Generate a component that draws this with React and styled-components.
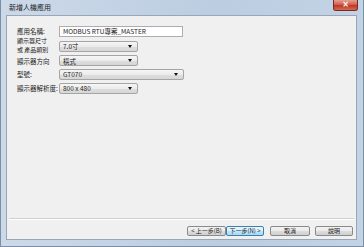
import React from 'react';
import styled, { createGlobalStyle } from 'styled-components';

const Global = createGlobalStyle`
  html, body { margin: 0; padding: 0; background: #bfcfe2; }
  body { font-family: "Noto Sans CJK TC", "Liberation Sans", sans-serif; }
`;

const Window = styled.div`
  width: 364px;
  height: 247px;
  box-sizing: border-box;
  display: flex;
  flex-direction: column;
  background: linear-gradient(90deg, #ccd9e9 0%, #bccde1 60%, #c3d3e6 100%);
  border: 1px solid #7d8ea4;
  border-top: none;
  padding: 0 6px 6px 5px;
`;

const TitleBar = styled.div`
  height: 15px;
  display: flex;
  align-items: flex-start;
  justify-content: space-between;
  padding-left: 3px;
`;

const Title = styled.span`
  font-size: 7px;
  line-height: 14px;
  color: #222;
`;

const CloseButton = styled.div`
  width: 23px;
  height: 10px;
  margin-right: -1px;
  border: 1px solid #7a2a22;
  border-top: none;
  border-radius: 0 0 3px 3px;
  background: linear-gradient(#e5a090 0%, #d2604c 45%, #c03a28 55%, #d56a50 100%);
  display: flex;
  align-items: center;
  justify-content: center;
  color: #fff;
  font-size: 8px;
  font-weight: bold;
  line-height: 1;
  font-family: "DejaVu Sans", sans-serif;
`;

const Content = styled.div`
  flex: 1;
  display: flex;
  flex-direction: column;
  background: #f0f0f0;
  border: 1px solid #98a6b8;
`;

const Form = styled.div`
  display: grid;
  grid-template-columns: 42px auto;
  grid-template-rows: 14px 16px 13px 14px 14px;
  align-items: center;
  padding: 8px 0 0 10px;
`;

const Label = styled.span`
  font-size: 6.5px;
  line-height: 8px;
  color: #222;
  white-space: nowrap;
`;

const StackedLabel = styled.span`
  display: flex;
  flex-direction: column;
  font-size: 6px;
  line-height: 8.8px;
  color: #222;
  white-space: nowrap;
`;

const TextInput = styled.div`
  width: ${p => p.$w}px;
  height: 11px;
  box-sizing: border-box;
  border: 1px solid #abadb3;
  background: #fff;
  font-size: 6.5px;
  line-height: 9px;
  padding-left: 3px;
  color: #222;
`;

const Select = styled.div`
  width: ${p => p.$w}px;
  height: 11px;
  box-sizing: border-box;
  border: 1px solid #a5a5a5;
  border-radius: 2px;
  background: linear-gradient(#f6f6f6 0%, #ebebeb 50%, #dedede 51%, #d6d6d6 100%);
  display: flex;
  align-items: center;
  justify-content: space-between;
  padding: 0 5px 0 3px;
  font-size: 6.5px;
  color: #222;
`;

const Arrow = styled.span`
  width: 0;
  height: 0;
  border-left: 2px solid transparent;
  border-right: 2px solid transparent;
  border-top: 3px solid #111;
`;

const Footer = styled.div`
  margin-top: auto;
  display: flex;
  flex-direction: column;
`;

const Separator = styled.div`
  margin: 0 2px;
  border-top: 1px solid #d0d0d0;
  border-bottom: 1px solid #fff;
`;

const ButtonRow = styled.div`
  display: flex;
  justify-content: flex-end;
  padding: 6px 3px 3px 0;
`;

const Button = styled.div`
  width: ${p => p.$w}px;
  height: 10px;
  margin-left: ${p => p.$gap}px;
  box-sizing: border-box;
  border: 1px solid ${p => (p.$primary ? '#3c7fb1' : '#8a8a8a')};
  border-radius: 2px;
  background: ${p =>
    p.$primary
      ? 'linear-gradient(#eaf6fd 0%, #d9f0fc 50%, #bee6fd 51%, #a7d9f5 100%)'
      : 'linear-gradient(#f2f2f2 0%, #ebebeb 50%, #dddddd 51%, #cfcfcf 100%)'};
  display: flex;
  align-items: center;
  justify-content: center;
  font-size: 6px;
  line-height: 1;
  color: #222;
  white-space: nowrap;
`;

const fields = [
  { label: '應用名稱:', kind: 'input', value: 'MODBUS RTU專案_MASTER', w: 124 },
  { label: ['顯示器尺寸', '或 產品類別'], kind: 'select', value: '7.0寸', w: 79 },
  { label: '顯示器方向', kind: 'select', value: '橫式', w: 79 },
  { label: '型號:', kind: 'select', value: 'GT070', w: 125 },
  { label: '顯示器解析度:', kind: 'select', value: '800 x 480', w: 79 },
];

const buttons = [
  { text: '< 上一步(B)', w: 39, gap: 0 },
  { text: '下一步(N) >', w: 38, gap: 0, primary: true },
  { text: '取消', w: 40, gap: 6 },
  { text: '說明', w: 38, gap: 5 },
];

export default function App() {
  return (
    <>
      <Global />
      <Window>
        <TitleBar>
          <Title>新增人機應用</Title>
          <CloseButton>×</CloseButton>
        </TitleBar>
        <Content>
          <Form>
            {fields.map((f, i) => (
              <React.Fragment key={i}>
                {Array.isArray(f.label) ? (
                  <StackedLabel>
                    {f.label.map(line => (
                      <span key={line}>{line}</span>
                    ))}
                  </StackedLabel>
                ) : (
                  <Label>{f.label}</Label>
                )}
                {f.kind === 'input' ? (
                  <TextInput $w={f.w}>{f.value}</TextInput>
                ) : (
                  <Select $w={f.w}>
                    <span>{f.value}</span>
                    <Arrow />
                  </Select>
                )}
              </React.Fragment>
            ))}
          </Form>
          <Footer>
            <Separator />
            <ButtonRow>
              {buttons.map(b => (
                <Button key={b.text} $w={b.w} $gap={b.gap} $primary={b.primary}>
                  {b.text}
                </Button>
              ))}
            </ButtonRow>
          </Footer>
        </Content>
      </Window>
    </>
  );
}
